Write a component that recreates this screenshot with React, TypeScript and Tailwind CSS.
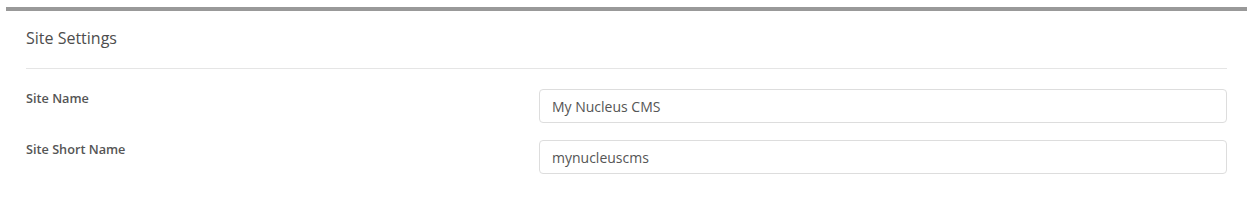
const fields = [
  { label: 'Site Name', value: 'My Nucleus CMS' },
  { label: 'Site Short Name', value: 'mynucleuscms' },
];

export default function App() {
  return (
    <div className="w-[1258px] h-[208px] bg-white pl-[6px] pr-[11px] pt-[7px] font-['Open_Sans',sans-serif] text-[#555]">
      <div className="border-t-4 border-[#999] px-5">
        <div className="pt-[15px] pb-[18px] border-b border-[#e5e5e5]">
          <h3 className="text-[16px] leading-[24px] font-normal text-[#4d4d4d]">Site Settings</h3>
        </div>
        <form className="pt-5 flex flex-col gap-[17px]">
          {fields.map((f) => (
            <div key={f.label} className="flex items-start">
              <label className="w-[513px] shrink-0 text-[12.7px] leading-[18px] font-semibold text-[#555]">
                {f.label}
              </label>
              <input
                readOnly
                value={f.value}
                className="flex-1 h-[34px] px-3 border border-[#ddd] rounded-[4px] text-[14px] text-[#555] outline-none"
              />
            </div>
          ))}
        </form>
      </div>
    </div>
  );
}
